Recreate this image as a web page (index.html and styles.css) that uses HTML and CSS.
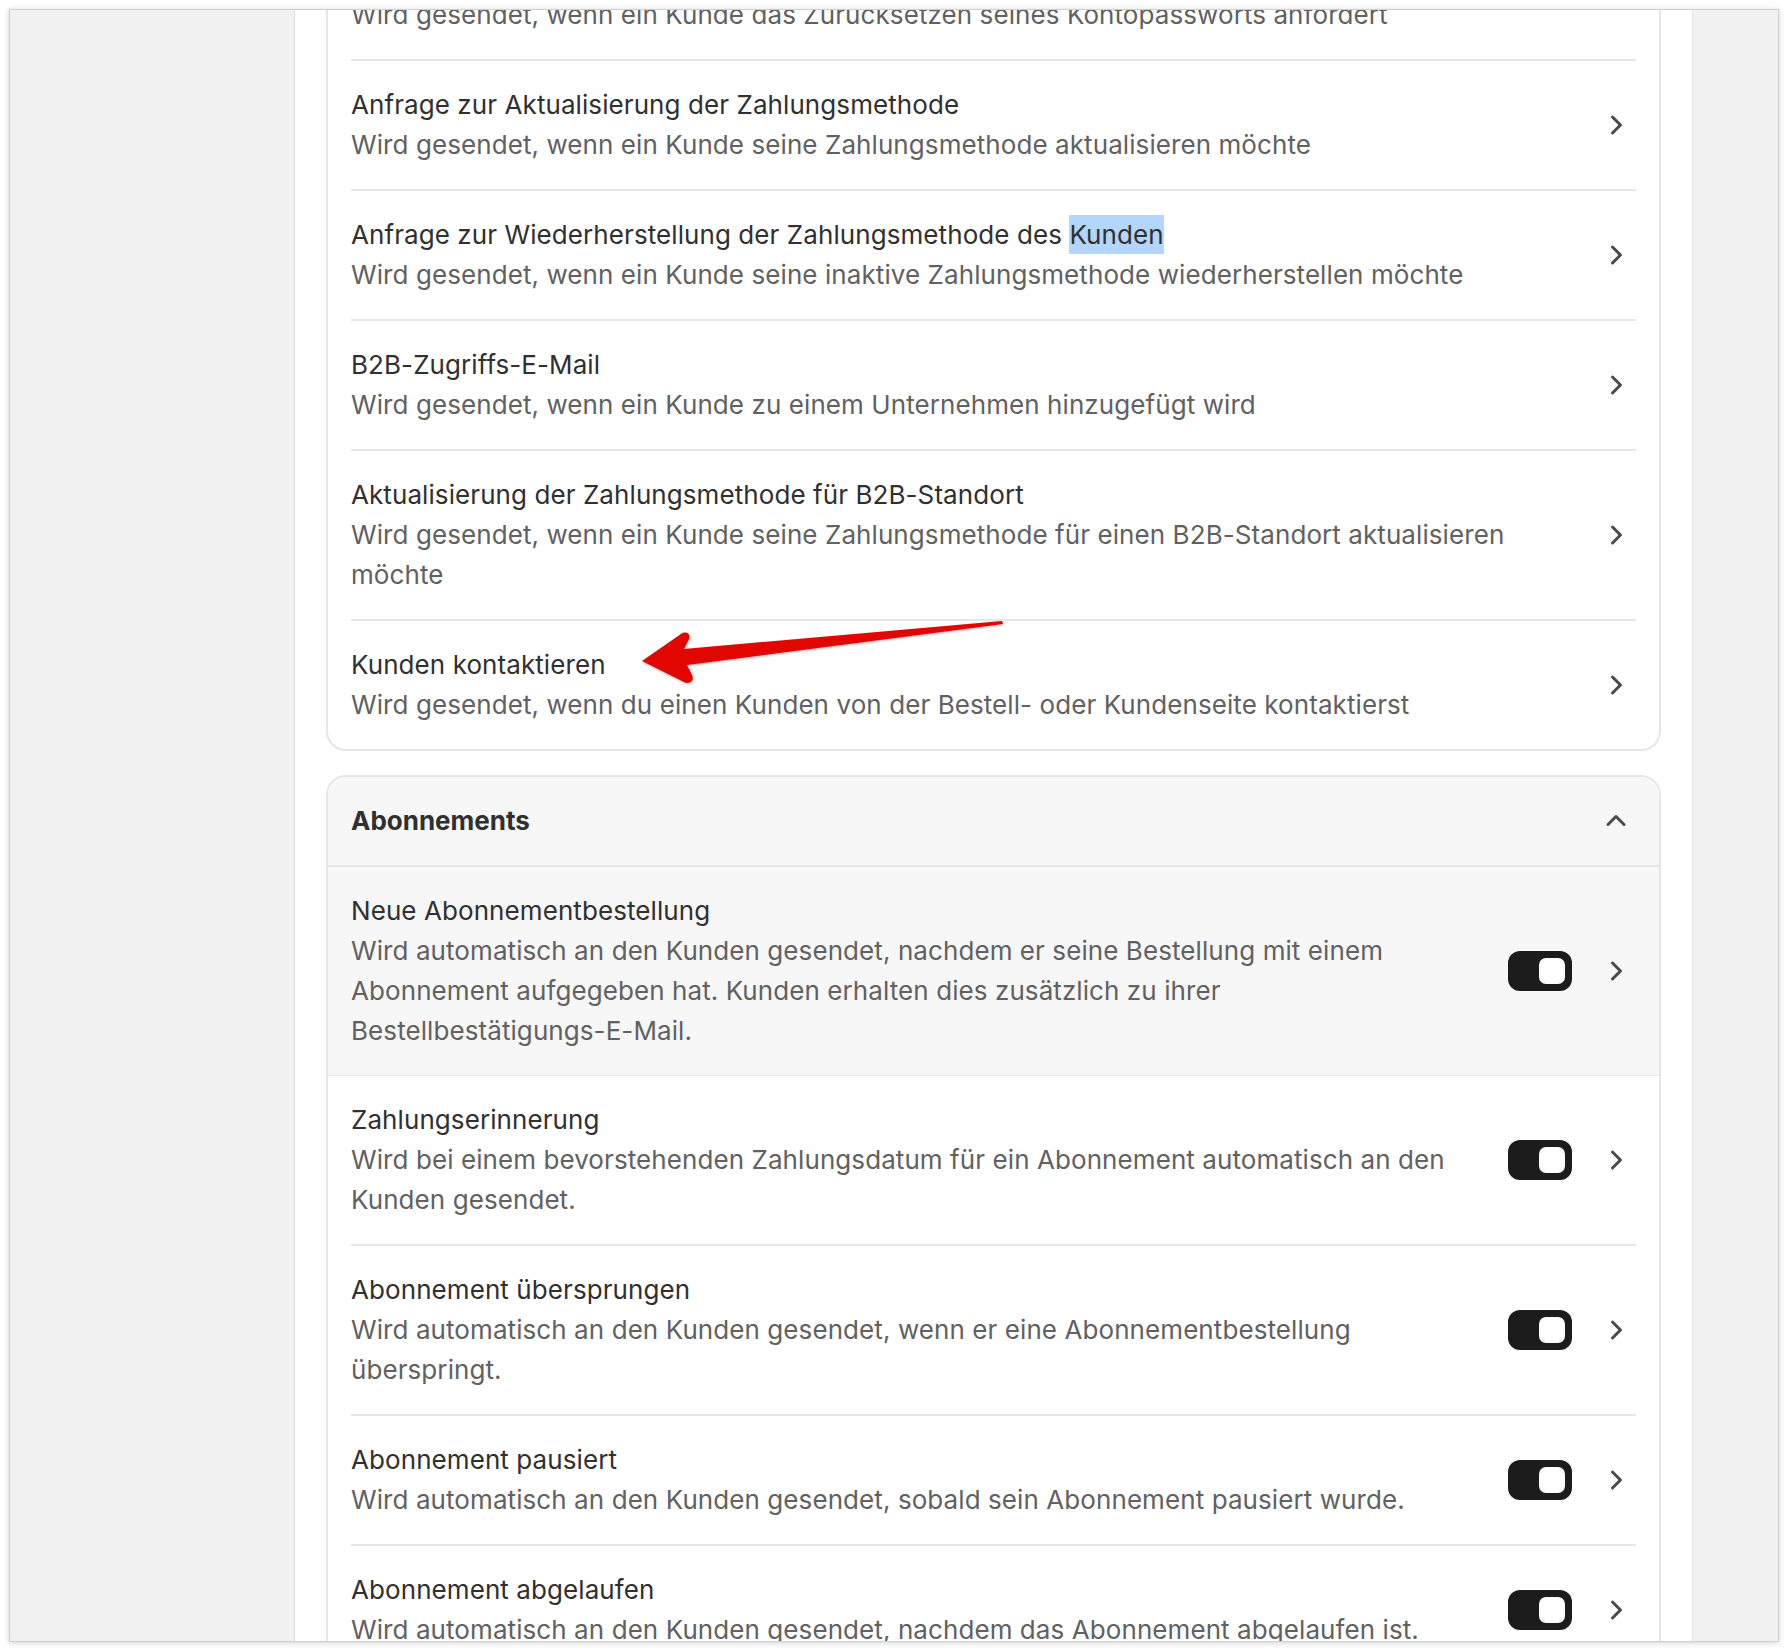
FILE: index.html
```html
<!DOCTYPE html>
<html lang="de">
<head>
<meta charset="utf-8">
<title>Benachrichtigungen</title>
<link rel="stylesheet" href="styles.css">
</head>
<body>
<div class="window">
  <aside class="side side-left"></aside>
  <main class="main">
    <div class="scroll">
      <section class="card">
        <div class="row">
          <div class="text">
            <div class="title">Passwort für Kundenkonto zurücksetzen</div>
            <div class="desc">Wird gesendet, wenn ein Kunde das Zurücksetzen seines Kontopassworts anfordert</div>
          </div>
          <span class="chev"><svg viewBox="0 0 20 20"><path d="M7.72 14.53a.75.75 0 0 1 0-1.06l3.47-3.47-3.47-3.47a.75.75 0 0 1 1.06-1.06l4 4a.75.75 0 0 1 0 1.06l-4 4a.75.75 0 0 1-1.06 0Z"/></svg></span>
        </div>
        <div class="row">
          <div class="text">
            <div class="title">Anfrage zur Aktualisierung der Zahlungsmethode</div>
            <div class="desc">Wird gesendet, wenn ein Kunde seine Zahlungsmethode aktualisieren möchte</div>
          </div>
          <span class="chev"><svg viewBox="0 0 20 20"><path d="M7.72 14.53a.75.75 0 0 1 0-1.06l3.47-3.47-3.47-3.47a.75.75 0 0 1 1.06-1.06l4 4a.75.75 0 0 1 0 1.06l-4 4a.75.75 0 0 1-1.06 0Z"/></svg></span>
        </div>
        <div class="row">
          <div class="text">
            <div class="title">Anfrage zur Wiederherstellung der Zahlungsmethode des <span class="sel">Kunden</span></div>
            <div class="desc">Wird gesendet, wenn ein Kunde seine inaktive Zahlungsmethode wiederherstellen möchte</div>
          </div>
          <span class="chev"><svg viewBox="0 0 20 20"><path d="M7.72 14.53a.75.75 0 0 1 0-1.06l3.47-3.47-3.47-3.47a.75.75 0 0 1 1.06-1.06l4 4a.75.75 0 0 1 0 1.06l-4 4a.75.75 0 0 1-1.06 0Z"/></svg></span>
        </div>
        <div class="row">
          <div class="text">
            <div class="title">B2B-Zugriffs-E-Mail</div>
            <div class="desc">Wird gesendet, wenn ein Kunde zu einem Unternehmen hinzugefügt wird</div>
          </div>
          <span class="chev"><svg viewBox="0 0 20 20"><path d="M7.72 14.53a.75.75 0 0 1 0-1.06l3.47-3.47-3.47-3.47a.75.75 0 0 1 1.06-1.06l4 4a.75.75 0 0 1 0 1.06l-4 4a.75.75 0 0 1-1.06 0Z"/></svg></span>
        </div>
        <div class="row">
          <div class="text">
            <div class="title">Aktualisierung der Zahlungsmethode für B2B-Standort</div>
            <div class="desc">Wird gesendet, wenn ein Kunde seine Zahlungsmethode für einen B2B-Standort aktualisieren möchte</div>
          </div>
          <span class="chev"><svg viewBox="0 0 20 20"><path d="M7.72 14.53a.75.75 0 0 1 0-1.06l3.47-3.47-3.47-3.47a.75.75 0 0 1 1.06-1.06l4 4a.75.75 0 0 1 0 1.06l-4 4a.75.75 0 0 1-1.06 0Z"/></svg></span>
        </div>
        <div class="row">
          <div class="text">
            <div class="title">Kunden kontaktieren</div>
            <div class="desc">Wird gesendet, wenn du einen Kunden von der Bestell- oder Kundenseite kontaktierst</div>
          </div>
          <span class="chev"><svg viewBox="0 0 20 20"><path d="M7.72 14.53a.75.75 0 0 1 0-1.06l3.47-3.47-3.47-3.47a.75.75 0 0 1 1.06-1.06l4 4a.75.75 0 0 1 0 1.06l-4 4a.75.75 0 0 1-1.06 0Z"/></svg></span>
        </div>
      </section>

      <section class="card">
        <header class="card-head">
          <h2 class="head-title">Abonnements</h2>
          <span class="chev"><svg viewBox="0 0 20 20"><path d="M14.53 12.28a.75.75 0 0 1-1.06 0l-3.47-3.47-3.47 3.47a.75.75 0 0 1-1.06-1.06l4-4a.75.75 0 0 1 1.06 0l4 4a.75.75 0 0 1 0 1.06Z"/></svg></span>
        </header>
        <div class="row row-hover">
          <div class="text">
            <div class="title">Neue Abonnementbestellung</div>
            <div class="desc">Wird automatisch an den Kunden gesendet, nachdem er seine Bestellung mit einem Abonnement aufgegeben hat. Kunden erhalten dies zusätzlich zu ihrer <span class="nowrap">Bestellbestätigungs-E-Mail.</span></div>
          </div>
          <span class="toggle"><span class="knob"></span></span>
          <span class="chev"><svg viewBox="0 0 20 20"><path d="M7.72 14.53a.75.75 0 0 1 0-1.06l3.47-3.47-3.47-3.47a.75.75 0 0 1 1.06-1.06l4 4a.75.75 0 0 1 0 1.06l-4 4a.75.75 0 0 1-1.06 0Z"/></svg></span>
        </div>
        <div class="row">
          <div class="text">
            <div class="title">Zahlungserinnerung</div>
            <div class="desc">Wird bei einem bevorstehenden Zahlungsdatum für ein Abonnement automatisch an den Kunden gesendet.</div>
          </div>
          <span class="toggle"><span class="knob"></span></span>
          <span class="chev"><svg viewBox="0 0 20 20"><path d="M7.72 14.53a.75.75 0 0 1 0-1.06l3.47-3.47-3.47-3.47a.75.75 0 0 1 1.06-1.06l4 4a.75.75 0 0 1 0 1.06l-4 4a.75.75 0 0 1-1.06 0Z"/></svg></span>
        </div>
        <div class="row">
          <div class="text">
            <div class="title">Abonnement übersprungen</div>
            <div class="desc">Wird automatisch an den Kunden gesendet, wenn er eine Abonnementbestellung überspringt.</div>
          </div>
          <span class="toggle"><span class="knob"></span></span>
          <span class="chev"><svg viewBox="0 0 20 20"><path d="M7.72 14.53a.75.75 0 0 1 0-1.06l3.47-3.47-3.47-3.47a.75.75 0 0 1 1.06-1.06l4 4a.75.75 0 0 1 0 1.06l-4 4a.75.75 0 0 1-1.06 0Z"/></svg></span>
        </div>
        <div class="row">
          <div class="text">
            <div class="title">Abonnement pausiert</div>
            <div class="desc">Wird automatisch an den Kunden gesendet, sobald sein Abonnement pausiert wurde.</div>
          </div>
          <span class="toggle"><span class="knob"></span></span>
          <span class="chev"><svg viewBox="0 0 20 20"><path d="M7.72 14.53a.75.75 0 0 1 0-1.06l3.47-3.47-3.47-3.47a.75.75 0 0 1 1.06-1.06l4 4a.75.75 0 0 1 0 1.06l-4 4a.75.75 0 0 1-1.06 0Z"/></svg></span>
        </div>
        <div class="row">
          <div class="text">
            <div class="title">Abonnement abgelaufen</div>
            <div class="desc">Wird automatisch an den Kunden gesendet, nachdem das Abonnement abgelaufen ist.</div>
          </div>
          <span class="toggle"><span class="knob"></span></span>
          <span class="chev"><svg viewBox="0 0 20 20"><path d="M7.72 14.53a.75.75 0 0 1 0-1.06l3.47-3.47-3.47-3.47a.75.75 0 0 1 1.06-1.06l4 4a.75.75 0 0 1 0 1.06l-4 4a.75.75 0 0 1-1.06 0Z"/></svg></span>
        </div>
      </section>
    </div>
  </main>
  <aside class="side side-right"></aside>
</div>
<svg class="arrow" viewBox="0 0 1788 1650" aria-hidden="true">
  <path d="M642,661 L681,634 C685,631 691,633 689,639 L684,649 L1002,621 L1003,624 L687,665 L692,675 C695,681 689,685 684,682 Z"/>
</svg>
</body>
</html>
```
FILE: styles.css
```css
* { box-sizing: border-box; }

html, body {
  margin: 0;
  padding: 0;
}

body {
  position: relative;
  width: 1788px;
  height: 1650px;
  overflow: hidden;
  background: #ffffff;
  font-family: "Inter", "Noto Sans", "Liberation Sans", sans-serif;
  color: #303030;
}

.window {
  margin: 9px 0 0 9px;
  width: 1770px;
  height: 1633px;
  border: 1px solid #cfcfcf;
  box-shadow: 0 1px 6px rgba(0, 0, 0, 0.18);
  overflow: hidden;
  display: grid;
  grid-template-columns: 285px 1397px 86px;
  background: #ffffff;
}

.side {
  background: #f1f1f1;
  height: 100%;
}

.side-left {
  border-right: 1px solid #dedede;
}

.side-right {
  border-left: 1px solid #e4e4e4;
}

.main {
  background: #ffffff;
  overflow: hidden;
  padding: 0 31px;
}

.scroll {
  margin-top: -81px;
  display: flex;
  flex-direction: column;
  gap: 24px;
}

.card {
  border: 2px solid #e6e6e6;
  border-radius: 20px;
  overflow: hidden;
  background: #ffffff;
}

.row {
  display: flex;
  align-items: center;
  gap: 24px;
  margin: 0 23px;
  padding: 24px 0;
  border-bottom: 2px solid #e6e6e6;
}

.row:last-child {
  border-bottom: none;
}

.row-hover {
  margin: 0;
  padding: 24px 23px;
  background: #f7f7f7;
  border-bottom: 1px solid #e6e6e6;
}

.text {
  flex: 1;
  min-width: 0;
}

.title {
  font-size: 26px;
  line-height: 40px;
  font-weight: 400;
  letter-spacing: 0.08px;
  color: #303030;
}

.desc {
  font-size: 26px;
  line-height: 40px;
  font-weight: 400;
  letter-spacing: 0.08px;
  color: #616161;
}

.nowrap {
  white-space: nowrap;
}

.sel {
  background: #b4d6fd;
  padding: 4px 0;
}

.chev {
  flex: none;
  width: 40px;
  height: 40px;
  display: block;
}

.chev svg {
  display: block;
  width: 40px;
  height: 40px;
  fill: #4a4a4a;
}

.toggle {
  flex: none;
  width: 64px;
  height: 40px;
  border-radius: 12px;
  background: #1c1c1c;
  display: flex;
  align-items: center;
  justify-content: flex-end;
  padding: 0 7px;
}

.knob {
  width: 26px;
  height: 26px;
  border-radius: 7px;
  background: #ffffff;
}

.card-head {
  display: flex;
  align-items: center;
  justify-content: space-between;
  padding: 24px 23px;
  background: #f7f7f7;
  border-bottom: 2px solid #e6e6e6;
}

.head-title {
  margin: 0;
  font-size: 26px;
  line-height: 40px;
  font-weight: 650;
  color: #303030;
}

.arrow {
  position: absolute;
  left: 0;
  top: 0;
  width: 1788px;
  height: 1650px;
  pointer-events: none;
  fill: #e10600;
  filter: drop-shadow(0 1px 1px rgba(120, 0, 0, 0.35));
}
```
